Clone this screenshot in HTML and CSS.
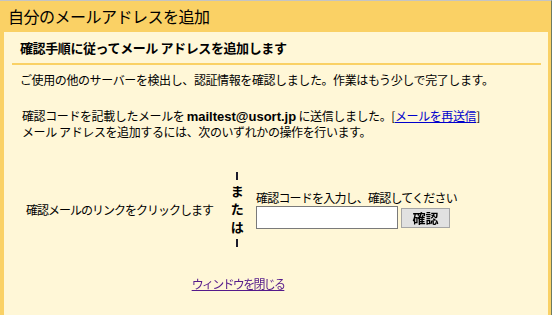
FILE: index.html
```html
<!DOCTYPE html>
<html lang="ja">
<head>
    <meta charset="UTF-8">
    <title>自分のメールアドレスを追加</title>
    <link rel="stylesheet" href="styles.css">
</head>
<body>
    <div class="window">
        <h1 class="title">自分のメールアドレスを追加</h1>
        <div class="panel">
            <h2 class="subtitle">確認手順に従ってメール アドレスを追加します</h2>
            <p class="intro">ご使用の他のサーバーを検出し、認証情報を確認しました。作業はもう少しで完了します。</p>
            <p class="notice">確認コードを記載したメールを <b class="email">mailtest@usort.jp</b> に送信しました。[<a href="#" class="resend">メールを再送信</a>]<br>メール アドレスを追加するには、次のいずれかの操作を行います。</p>

            <div class="choices">
                <div class="choice-link">確認メールのリンクをクリックします</div>
                <div class="or">
                    <span class="bar"></span>
                    <span class="or-text">ま<br>た<br>は</span>
                    <span class="bar"></span>
                </div>
                <div class="choice-code">
                    <label for="code">確認コードを入力し、確認してください</label>
                    <div class="code-row">
                        <input id="code" type="text" autofocus>
                        <button>確認</button>
                    </div>
                </div>
                <div class="close"><a href="#">ウィンドウを閉じる</a></div>
            </div>
        </div>
    </div>
</body>
</html>
```

FILE: styles.css
```css
html, body {
    margin: 0;
    height: 100%;
}
body {
    box-sizing: border-box;
    background: #fad165;
    border-top: 1px solid #c4c4c4;
    border-right: 1px solid #6d7b5f;
    font-family: "Noto Sans CJK JP", sans-serif;
    font-size: 12px;
    letter-spacing: -0.4px;
    color: #000;
}
.window {
    display: flex;
    flex-direction: column;
    height: 100%;
}
.title {
    margin: 0;
    height: 31px;
    padding-left: 8px;
    font-size: 16px;
    font-weight: normal;
    line-height: 31px;
    letter-spacing: -0.5px;
}
.panel {
    flex: 1;
    background: #fff7d7;
    margin: 0 3px 0 4px;
    padding: 0 7px 0 8px;
}
.subtitle {
    margin: 0;
    padding: 8px 8px 7px;
    font-size: 13px;
    line-height: 16px;
    border-bottom: 2px solid #fad165;
}
.intro {
    margin: 7px 0 0 8px;
    line-height: 16px;
}
.notice {
    margin: 20px 0 0 10px;
    line-height: 15px;
}
.email {
    font-family: "Liberation Sans", sans-serif;
    font-size: 13px;
    letter-spacing: 0;
}
.resend {
    color: #0000cc;
}
.choices {
    display: grid;
    grid-template-columns: 200px 34px 202px;
    align-items: center;
    margin: 33px 0 0 8px;
}
.choice-link {
    padding-left: 6px;
    white-space: nowrap;
    letter-spacing: -1px;
}
.or {
    display: flex;
    flex-direction: column;
    align-items: center;
    font-size: 13px;
    font-weight: bold;
    line-height: 18px;
}
.bar {
    width: 2px;
    height: 8px;
    background: #1c1c2c;
}
.or-text {
    margin: 2px 0 3px;
    text-align: center;
}
.choice-code {
    padding-left: 2px;
}
.choice-code label {
    display: block;
    line-height: 15px;
    margin-bottom: 1px;
    white-space: nowrap;
    letter-spacing: -0.8px;
}
.code-row {
    display: flex;
    align-items: center;
    gap: 3px;
}
.code-row input {
    box-sizing: border-box;
    width: 142px;
    height: 23px;
    margin: 0;
    padding: 0 2px;
    border: 1px solid #7a7a7a;
    background: #fff;
    font: inherit;
    outline: none;
}
.code-row button {
    box-sizing: border-box;
    width: 49px;
    height: 20px;
    padding: 0;
    border: 1px solid #a5a5a5;
    background: #e1e1e1;
    font-family: inherit;
    font-size: 13px;
    font-weight: bold;
    line-height: 18px;
    color: #000;
}
.close {
    grid-column: 1 / -1;
    margin-top: 29px;
    text-align: center;
    line-height: 16px;
}
.close a {
    color: #551a8b;
    letter-spacing: -1.7px;
}
```
